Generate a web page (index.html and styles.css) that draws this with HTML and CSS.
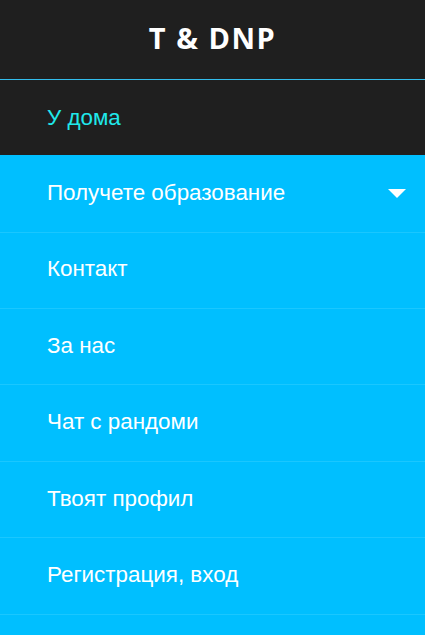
FILE: index.html
```html
<!DOCTYPE html>
<html lang="bg">
<head>
<meta charset="utf-8">
<link rel="stylesheet" href="styles.css">
</head>
<body>
<nav class="sidebar">
  <header class="brand">T &amp; DNP</header>
  <ul class="menu">
    <li class="item home"><a>У дома</a></li>
    <li class="item first"><a>Получете образование</a><span class="caret"></span></li>
    <li class="item"><a>Контакт</a></li>
    <li class="item"><a>За нас</a></li>
    <li class="item"><a>Чат с рандоми</a></li>
    <li class="item"><a>Твоят профил</a></li>
    <li class="item"><a>Регистрация, вход</a></li>
  </ul>
</nav>
</body>
</html>
```
FILE: styles.css
```css
html, body {
  margin: 0;
  padding: 0;
  background: #00bfff;
}
.sidebar {
  width: 425px;
  height: 635px;
  overflow: hidden;
  background: #00bfff;
  font-family: "Liberation Sans", Arial, sans-serif;
}
.brand {
  height: 80px;
  box-sizing: border-box;
  border-bottom: 1px solid #33bdec;
  background: #1f1f1f;
  color: #fff;
  font-family: "Open Sans", sans-serif;
  font-weight: 700;
  font-size: 29px;
  letter-spacing: 1.5px;
  display: flex;
  align-items: center;
  justify-content: center;
  padding-bottom: 5px;
}
.menu {
  list-style: none;
  margin: 0;
  padding: 0;
}
.item {
  height: 76.4px;
  box-sizing: border-box;
  border-bottom: 1px solid #1ac7ff;
  display: flex;
  align-items: center;
  justify-content: space-between;
  padding: 0 19px 2px 47px;
  color: #fff;
  font-size: 22.4px;
}
.item.first {
  height: 77.7px;
  padding-bottom: 0;
}
.item.home {
  height: 75px;
  background: #1f1f1f;
  color: #1fe8ea;
  border-bottom: none;
  padding-bottom: 0;
}
.caret {
  width: 0;
  height: 0;
  border-left: 9px solid transparent;
  border-right: 9px solid transparent;
  border-top: 9px solid #fff;
  margin-top: 0;
}
```
